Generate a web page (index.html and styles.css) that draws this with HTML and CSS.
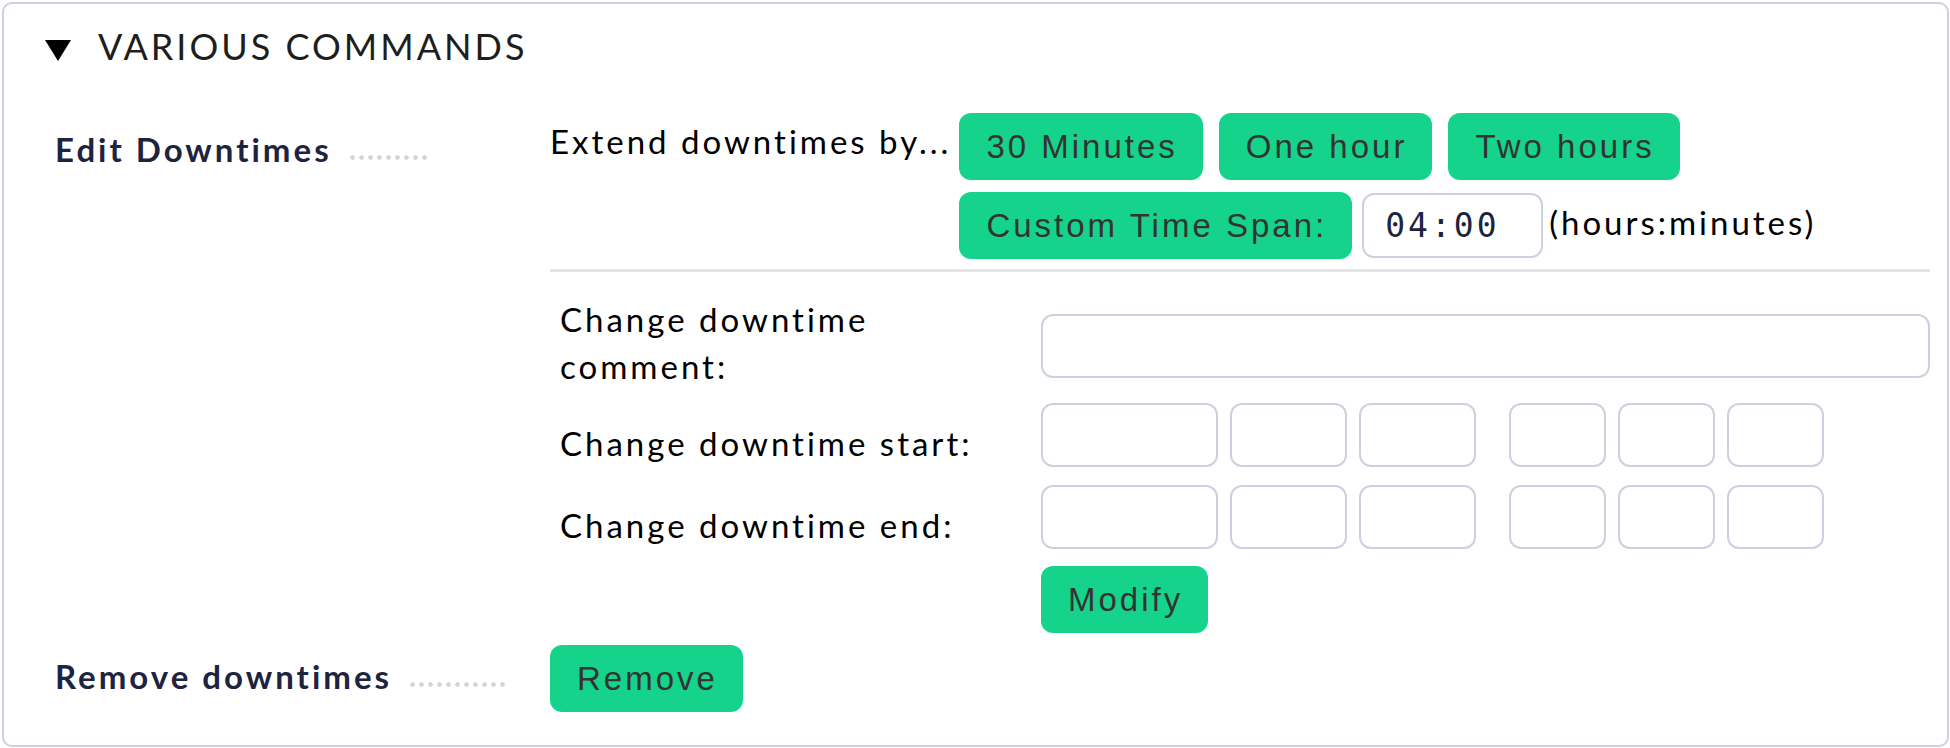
FILE: index.html
```html
<!DOCTYPE html>
<html>
<head>
<meta charset="utf-8">
<link rel="stylesheet" href="styles.css">
</head>
<body>
<div class="box">
  <div class="head">
    <span class="tri"></span>
    <span class="title">VARIOUS COMMANDS</span>
  </div>
  <div class="row row-edit">
    <div class="legend"><span class="legend-text">Edit Downtimes</span><span class="dots dots-edit"></span></div>
    <div class="content">
      <div class="extend">
        <span class="ext-label">Extend downtimes by...</span>
        <div class="btn-lines">
          <div class="btn-line">
            <span class="btn">30 Minutes</span>
            <span class="btn">One hour</span>
            <span class="btn">Two hours</span>
          </div>
          <div class="btn-line">
            <span class="btn">Custom Time Span:</span>
            <span class="input mono">04:00</span>
            <span class="hint">(hours:minutes)</span>
          </div>
        </div>
      </div>
      <div class="sep"></div>
      <div class="modgrid">
        <div class="mlabel mlabel-comment">Change downtime<br>comment:</div>
        <div class="input wide"></div>
        <div class="mlabel">Change downtime start:</div>
        <div class="dt">
          <span class="input w177"></span><span class="input w117"></span><span class="input w117"></span>
          <span class="input w97 gapl"></span><span class="input w97"></span><span class="input w97"></span>
        </div>
        <div class="mlabel">Change downtime end:</div>
        <div class="dt">
          <span class="input w177"></span><span class="input w117"></span><span class="input w117"></span>
          <span class="input w97 gapl"></span><span class="input w97"></span><span class="input w97"></span>
        </div>
        <div></div>
        <div class="modify-cell"><span class="btn">Modify</span></div>
      </div>
    </div>
  </div>
  <div class="row row-remove">
    <div class="legend"><span class="legend-text legend-remove">Remove downtimes</span><span class="dots dots-remove"></span></div>
    <div class="content"><span class="btn">Remove</span></div>
  </div>
</div>
</body>
</html>
```

FILE: styles.css
```css
html, body {
  margin: 0;
  padding: 0;
  background: #ffffff;
}
body {
  font-family: Lato, "Noto Sans", sans-serif;
  color: #000;
}
.box {
  margin: 2px 1px 0 2px;
  height: 745px;
  box-sizing: border-box;
  border: 2px solid #cfd0de;
  border-radius: 10px;
  padding: 0 17px 0 51px;
}
.head {
  display: flex;
  align-items: center;
  height: 84px;
  margin-left: -10px;
}
.tri {
  width: 0;
  height: 0;
  border-left: 13.5px solid transparent;
  border-right: 13.5px solid transparent;
  border-top: 21px solid #000;
  margin-right: 27px;
  margin-top: 8px;
}
.title {
  font-size: 36px;
  letter-spacing: 3px;
  color: #1e1e1e;
}
.row {
  display: flex;
}
.row-edit {
  margin-top: 25px;
}
.row-remove {
  margin-top: 12px;
}
.legend {
  width: 495px;
  flex: none;
  height: 67px;
  line-height: 67px;
  white-space: nowrap;
}
.legend-text {
  font-weight: bold;
  font-size: 33px;
  letter-spacing: 3px;
  color: #1e2340;
  position: relative;
  top: 3px;
}
.legend-remove {
  top: -2px;
}
.dots {
  display: inline-block;
  height: 5px;
  margin-left: 16px;
  vertical-align: baseline;
  position: relative;
  top: 1px;
  background-image: radial-gradient(circle, #d4d4d4 2px, transparent 2.5px);
  background-size: 9px 5px;
}
.legend-remove + .dots {
  top: -4px;
}
.dots-edit { width: 81px; }
.dots-remove { width: 99px; }
.content {
  flex: 1;
}
.extend {
  display: flex;
  align-items: flex-start;
}
.ext-label {
  font-size: 33px;
  letter-spacing: 3px;
  line-height: 67px;
  margin-right: 8px;
  white-space: nowrap;
  position: relative;
  top: -5px;
}
.btn-lines {
  display: flex;
  flex-direction: column;
  gap: 12px;
}
.btn-line {
  display: flex;
  align-items: center;
  gap: 16px;
}
.btn {
  display: inline-flex;
  align-items: center;
  height: 67px;
  box-sizing: border-box;
  padding: 0 25px 0 27px;
  background: #15d38a;
  border-radius: 12px;
  font-family: "Liberation Sans", Arial, sans-serif;
  font-size: 33px;
  letter-spacing: 3px;
  color: #333333;
  white-space: nowrap;
}
.input {
  display: inline-block;
  box-sizing: border-box;
  height: 64px;
  border: 2px solid #cfd0de;
  border-radius: 12px;
  background: #fff;
  vertical-align: top;
}
.mono {
  width: 181px;
  height: 65px;
  margin-left: -6px;
  padding-left: 21px;
  display: inline-flex;
  align-items: center;
  font-family: "DejaVu Sans Mono", monospace;
  font-size: 33px;
  letter-spacing: 3px;
  color: #1e2340;
}
.hint {
  font-size: 33px;
  letter-spacing: 3px;
  margin-left: -10px;
  position: relative;
  top: -4px;
}
.sep {
  height: 3px;
  background: #e3e3e3;
  margin-top: 10px;
}
.modgrid {
  display: grid;
  grid-template-columns: 481px 1fr;
  row-gap: 18px;
  align-items: end;
  margin-top: 24px;
  padding-left: 10px;
}
.mlabel {
  font-size: 33px;
  letter-spacing: 3px;
  line-height: 47px;
}
.mlabel-comment {
  align-self: start;
  margin-top: 0;
  margin-bottom: -5px;
}
.wide {
  display: block;
  width: 100%;
  align-self: start;
  margin-top: 18px;
}
.dt {
  display: flex;
  gap: 12px;
}
.modify-cell {
  margin-top: -1px;
}
.w177 { width: 177px; }
.w117 { width: 117px; }
.w97 { width: 97px; }
.gapl { margin-left: 21px; }
```
